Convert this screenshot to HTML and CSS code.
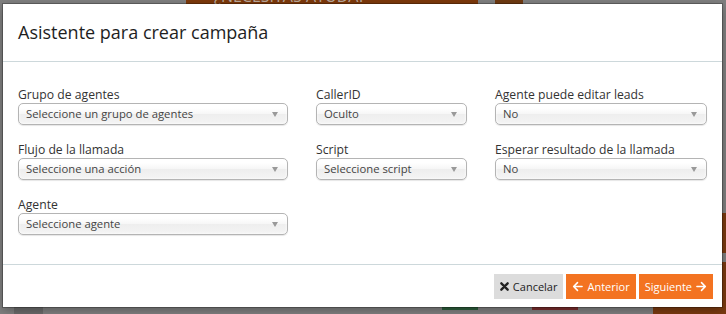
FILE: index.html
```html
<!DOCTYPE html>
<html lang="es">
<head>
    <meta charset="UTF-8">
    <meta name="viewport" content="width=device-width, initial-scale=1.0">
    <title>Asistente para crear campaña</title>
    <link rel="stylesheet" href="styles.css">
</head>
<body>

    <!-- Page behind the overlay (only edges visible) -->
    <div class="page-bg">
        <div class="bg-help">¿NECESITAS AYUDA?</div>
        <div class="bg-logo"></div>
        <div class="bg-side"></div>
        <div class="bg-side bg-side-low"></div>
        <div class="bg-tab"></div>
        <div class="bg-green"></div>
        <div class="bg-red"></div>
        <div class="bg-activity"></div>
    </div>

    <div class="modal">
        <div class="modal-header">
            <h4>Asistente para crear campaña</h4>
        </div>

        <div class="modal-body">
            <div class="col col-wide">
                <div class="form-group">
                    <label>Grupo de agentes</label>
                    <div class="chosen">Seleccione un grupo de agentes</div>
                </div>
                <div class="form-group">
                    <label>Flujo de la llamada</label>
                    <div class="chosen">Seleccione una acción</div>
                </div>
                <div class="form-group">
                    <label>Agente</label>
                    <div class="chosen">Seleccione agente</div>
                </div>
            </div>

            <div class="col col-narrow">
                <div class="form-group">
                    <label>CallerID</label>
                    <div class="chosen">Oculto</div>
                </div>
                <div class="form-group">
                    <label>Script</label>
                    <div class="chosen">Seleccione script</div>
                </div>
            </div>

            <div class="col col-mid">
                <div class="form-group">
                    <label>Agente puede editar leads</label>
                    <div class="chosen">No</div>
                </div>
                <div class="form-group">
                    <label>Esperar resultado de la llamada</label>
                    <div class="chosen">No</div>
                </div>
            </div>
        </div>

        <div class="modal-footer">
            <button class="btn btn-default">
                <svg width="9" height="9" viewBox="0 0 10 10"><path d="M1.5 1.5 L8.5 8.5 M8.5 1.5 L1.5 8.5" stroke="#222" stroke-width="2.6" stroke-linecap="round"/></svg>
                Cancelar
            </button>
            <button class="btn btn-orange">
                <svg width="11" height="11" viewBox="0 0 12 12"><path d="M11 6 H2 M6 1.8 L1.8 6 L6 10.2" stroke="#fff" stroke-width="1.7" fill="none" stroke-linejoin="round" stroke-linecap="round"/></svg>
                Anterior
            </button>
            <button class="btn btn-orange">
                Siguiente
                <svg width="11" height="11" viewBox="0 0 12 12"><path d="M1 6 H10 M6 1.8 L10.2 6 L6 10.2" stroke="#fff" stroke-width="1.7" fill="none" stroke-linejoin="round" stroke-linecap="round"/></svg>
            </button>
        </div>
    </div>

</body>
</html>
```

FILE: styles.css
```css
body, html {
    margin: 0;
    padding: 0;
    height: 100%;
    overflow: hidden;
    font-family: "Open Sans", Arial, sans-serif;
    background-color: #7f7f7f;
}

/* dimmed page behind the modal */
.page-bg {
    position: absolute;
    top: 0;
    left: 0;
    width: 726px;
    height: 314px;
}

.bg-help {
    position: absolute;
    left: 186px;
    top: -12px;
    width: 292px;
    height: 16px;
    background-color: #7c380b;
    color: #b9a89c;
    font-size: 16px;
    line-height: 16px;
    padding-left: 28px;
    box-sizing: border-box;
    overflow: hidden;
}

.bg-logo {
    position: absolute;
    left: 495px;
    top: 0;
    width: 28px;
    height: 4px;
    background-color: #6e3a12;
}

.bg-side {
    position: absolute;
    left: 722px;
    top: 213px;
    width: 4px;
    height: 40px;
    background-color: #7a3a10;
}

.bg-side-low {
    top: 262px;
    height: 52px;
}

.bg-tab {
    position: absolute;
    left: 14px;
    top: 307px;
    width: 29px;
    height: 7px;
    background-color: #6a6a6a;
}

.bg-green {
    position: absolute;
    left: 442px;
    top: 307px;
    width: 36px;
    height: 3px;
    background-color: #2d5e3c;
}

.bg-red {
    position: absolute;
    left: 532px;
    top: 307px;
    width: 46px;
    height: 3px;
    background-color: #7a2d2d;
}

.bg-activity {
    position: absolute;
    left: 653px;
    top: 305px;
    width: 73px;
    height: 9px;
    background-color: #7a3a10;
}

/* modal */
.modal {
    position: relative;
    width: 719px;
    margin: 4px 0 0 3px;
    background-color: white;
    box-shadow: 0 0 0 1px rgba(0, 0, 0, 0.25), 0 3px 9px rgba(0, 0, 0, 0.3);
    color: #333;
}

.modal-header {
    padding: 15px;
    border-bottom: 1px solid #cdd8db;
}

.modal-header h4 {
    margin: 0;
    font-size: 18px;
    font-weight: normal;
    line-height: 27px;
    color: #1e1e1e;
}

.modal-body {
    display: flex;
    gap: 28px;
    padding: 24px 15px 13px;
}

.col-wide {
    width: 270px;
}

.col-narrow {
    width: 151px;
}

.col-mid {
    width: 212px;
}

.form-group {
    margin-bottom: 16px;
}

.form-group label {
    display: block;
    font-size: 12.2px;
    line-height: 17px;
    color: #333;
}

.chosen {
    position: relative;
    height: 22px;
    box-sizing: border-box;
    border: 1px solid #b4b4b4;
    border-radius: 5px;
    background: linear-gradient(#fff 20%, #f6f6f6 50%, #eee 52%, #f4f4f4 100%);
    box-shadow: inset 0 0 3px #fff, 0 1px 1px rgba(0, 0, 0, 0.1);
    padding-left: 7px;
    font-size: 11.3px;
    line-height: 20px;
    color: #444;
    white-space: nowrap;
}

.chosen::after {
    content: "";
    position: absolute;
    right: 9px;
    top: 8px;
    border-left: 3.5px solid transparent;
    border-right: 3.5px solid transparent;
    border-top: 5px solid #999;
}

.modal-footer {
    display: flex;
    justify-content: flex-end;
    gap: 3px;
    padding: 9px 9px 8px;
    border-top: 1px solid #cdd8db;
}

.btn {
    display: flex;
    align-items: center;
    gap: 4px;
    height: 25px;
    padding: 0 6px;
    border: none;
    font-family: "Open Sans", Arial, sans-serif;
    font-size: 11px;
    cursor: pointer;
}

.btn-default {
    background-color: #dcdcdc;
    color: #222;
}

.btn-orange {
    background-color: #f37321;
    color: white;
}

.btn-orange:hover {
    background-color: #e0651a;
}
```
